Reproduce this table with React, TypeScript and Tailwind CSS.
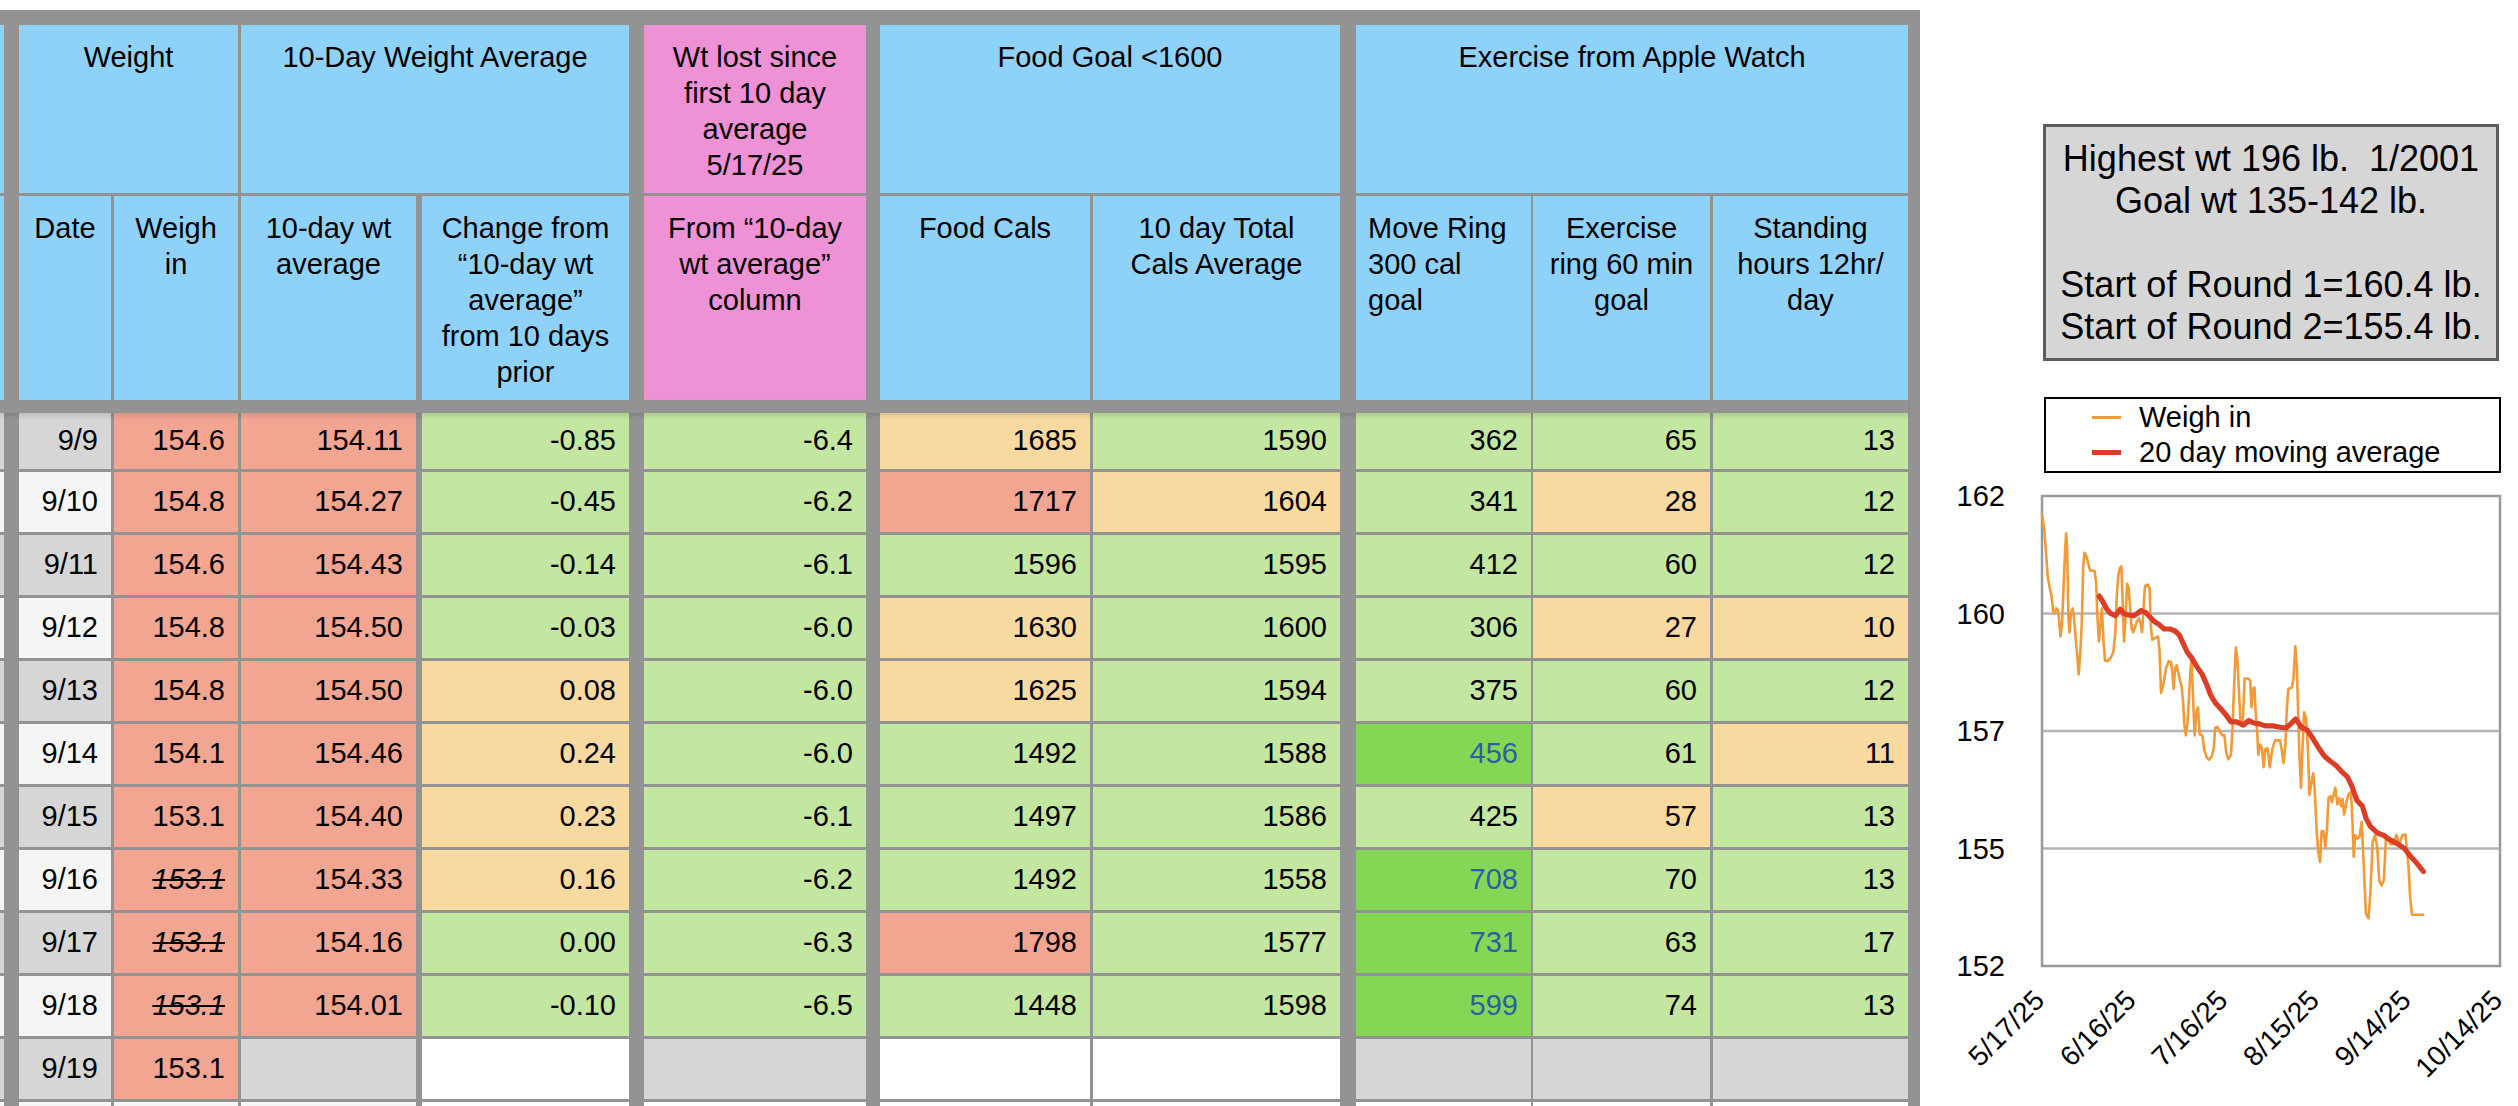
import type { ReactNode } from "react";

const fill = {
	R: "bg-[#f2a692]",
	G: "bg-[#c3e6a0]",
	O: "bg-[#f8d9a0]",
	B: "bg-[#84d655]",
	D: "bg-[#d6d6d6]",
	W: "bg-[#f5f5f5]",
	E: "bg-white",
};
type Fill = keyof typeof fill;
type Cell = [string, Fill, ("s" | "b")?];

const cols = [
	{ w: "w-[92px]", ml: "ml-[15px]" },
	{ w: "w-[124px]", ml: "ml-[3px]" },
	{ w: "w-[175px]", ml: "ml-[3px]" },
	{ w: "w-[207px]", ml: "ml-[6px]" },
	{ w: "w-[222px]", ml: "ml-[15px]" },
	{ w: "w-[210px]", ml: "ml-[14px]" },
	{ w: "w-[247px]", ml: "ml-[3px]" },
	{ w: "w-[175px]", ml: "ml-[16px]" },
	{ w: "w-[177px]", ml: "ml-[2px]" },
	{ w: "w-[195px]", ml: "ml-[3px]" },
];

const rows: Cell[][] = [
	[["9/9", "D"], ["154.6", "R"], ["154.11", "R"], ["-0.85", "G"], ["-6.4", "G"], ["1685", "O"], ["1590", "G"], ["362", "G"], ["65", "G"], ["13", "G"]],
	[["9/10", "W"], ["154.8", "R"], ["154.27", "R"], ["-0.45", "G"], ["-6.2", "G"], ["1717", "R"], ["1604", "O"], ["341", "G"], ["28", "O"], ["12", "G"]],
	[["9/11", "D"], ["154.6", "R"], ["154.43", "R"], ["-0.14", "G"], ["-6.1", "G"], ["1596", "G"], ["1595", "G"], ["412", "G"], ["60", "G"], ["12", "G"]],
	[["9/12", "W"], ["154.8", "R"], ["154.50", "R"], ["-0.03", "G"], ["-6.0", "G"], ["1630", "O"], ["1600", "G"], ["306", "G"], ["27", "O"], ["10", "O"]],
	[["9/13", "D"], ["154.8", "R"], ["154.50", "R"], ["0.08", "O"], ["-6.0", "G"], ["1625", "O"], ["1594", "G"], ["375", "G"], ["60", "G"], ["12", "G"]],
	[["9/14", "W"], ["154.1", "R"], ["154.46", "R"], ["0.24", "O"], ["-6.0", "G"], ["1492", "G"], ["1588", "G"], ["456", "B", "b"], ["61", "G"], ["11", "O"]],
	[["9/15", "D"], ["153.1", "R"], ["154.40", "R"], ["0.23", "O"], ["-6.1", "G"], ["1497", "G"], ["1586", "G"], ["425", "G"], ["57", "O"], ["13", "G"]],
	[["9/16", "W"], ["153.1", "R", "s"], ["154.33", "R"], ["0.16", "O"], ["-6.2", "G"], ["1492", "G"], ["1558", "G"], ["708", "B", "b"], ["70", "G"], ["13", "G"]],
	[["9/17", "D"], ["153.1", "R", "s"], ["154.16", "R"], ["0.00", "G"], ["-6.3", "G"], ["1798", "R"], ["1577", "G"], ["731", "B", "b"], ["63", "G"], ["17", "G"]],
	[["9/18", "W"], ["153.1", "R", "s"], ["154.01", "R"], ["-0.10", "G"], ["-6.5", "G"], ["1448", "G"], ["1598", "G"], ["599", "B", "b"], ["74", "G"], ["13", "G"]],
	[["9/19", "D"], ["153.1", "R"], ["", "D"], ["", "E"], ["", "D"], ["", "E"], ["", "E"], ["", "D"], ["", "D"], ["", "D"]],
	[["", "W"], ["", "W"], ["", "W"], ["", "E"], ["", "E"], ["", "E"], ["", "E"], ["", "E"], ["", "E"], ["", "E"]],
];

function Head({ className, children }: { className: string; children: ReactNode }) {
	return <div className={`whitespace-nowrap pt-[14px] leading-[36px] ${className}`}>{children}</div>;
}

function DataRow({ cells, first }: { cells: Cell[]; first: boolean }) {
	return (
		<div className={first ? "flex h-[56px]" : "mt-[3px] flex h-[60px]"}>
			<div className={`w-[4px] ${fill[cells[0][1]]}`} />
			{cells.map(([text, bg, flag], i) => (
				<div
					key={i}
					className={`flex items-center justify-end pr-[13px] ${cols[i].w} ${cols[i].ml} ${fill[bg]} ${
						flag === "s" ? "italic line-through" : ""
					} ${flag === "b" ? "text-[#2c5ea6]" : "text-black"}`}
				>
					{text}
				</div>
			))}
		</div>
	);
}

// traced from the chart: x on a 0.3814 px grid from 1920, y on a 0.4123 px grid from 460
const weighIn: [number, number][] = [
	[320, 130], [326, 170], [331, 230], [335, 285], [340, 310], [345, 330], [349, 368], [353, 372], [357, 360], [361, 362],
	[364, 380], [368, 428], [372, 400], [376, 320], [380, 230], [383, 178], [386, 220], [389, 380], [392, 418], [396, 370],
	[400, 360], [404, 385], [408, 430], [412, 470], [416, 520], [420, 470], [424, 400], [428, 260], [431, 225], [436, 232],
	[441, 250], [446, 268], [452, 268], [458, 270], [462, 300], [465, 380], [469, 440], [473, 400], [477, 360], [481, 440],
	[485, 486], [492, 488], [500, 480], [507, 465], [512, 420], [516, 330], [520, 280], [524, 262], [528, 258], [531, 330],
	[535, 440], [539, 380], [543, 300], [547, 310], [551, 360], [555, 410], [559, 418], [564, 405], [569, 392], [574, 384],
	[578, 395], [582, 418], [586, 360], [590, 305], [597, 302], [602, 310], [605, 400], [609, 436], [616, 432], [624, 428],
	[628, 460], [632, 565], [638, 545], [645, 505], [652, 488], [658, 490], [662, 520], [665, 555], [669, 505], [673, 498],
	[677, 515], [682, 535], [686, 548], [690, 590], [693, 640], [697, 668], [701, 640], [705, 580], [709, 510], [712, 485],
	[716, 580], [720, 668], [725, 610], [729, 600], [733, 665], [740, 668], [746, 705], [752, 722], [758, 727], [765, 718],
	[770, 700], [774, 650], [780, 647], [787, 660], [793, 668], [798, 668], [803, 710], [808, 726], [815, 716], [819, 660],
	[823, 560], [828, 455], [832, 480], [836, 560], [840, 630], [846, 638], [851, 530], [860, 530], [866, 535], [869, 600],
	[873, 555], [877, 552], [880, 610], [884, 660], [887, 715], [892, 690], [897, 700], [901, 745], [906, 700], [912, 700],
	[917, 745], [924, 700], [931, 680], [937, 680], [944, 680], [948, 700], [953, 735], [958, 690], [962, 600], [966, 555],
	[975, 552], [979, 530], [984, 452], [988, 500], [991, 600], [995, 720], [999, 795], [1003, 700], [1007, 612], [1012, 625],
	[1017, 700], [1021, 812], [1026, 785], [1031, 760], [1035, 800], [1040, 900], [1044, 950], [1049, 975], [1053, 900],
	[1058, 900], [1063, 940], [1067, 895], [1071, 820], [1076, 815], [1080, 830], [1085, 810], [1089, 795], [1094, 835],
	[1099, 820], [1104, 840], [1108, 822], [1112, 860], [1118, 830], [1124, 810], [1130, 805], [1134, 880], [1137, 962],
	[1141, 910], [1146, 918], [1152, 915], [1158, 878], [1164, 990], [1169, 1100], [1176, 1112], [1181, 1050], [1187, 925],
	[1193, 910], [1199, 940], [1204, 1020], [1210, 1032], [1216, 1020], [1222, 912], [1228, 918], [1234, 932], [1241, 932],
	[1249, 909], [1257, 932], [1265, 909], [1273, 909], [1281, 989], [1285, 1060], [1290, 1103], [1322, 1103],
];

const average: [number, number][] = [
	[470, 330], [480, 345], [490, 362], [500, 372], [512, 378], [525, 362], [535, 373], [548, 376], [560, 378], [570, 372],
	[580, 365], [592, 370], [604, 382], [615, 392], [628, 400], [640, 410], [655, 410], [668, 414], [680, 425], [690, 445],
	[700, 465], [712, 480], [725, 500], [740, 520], [752, 545], [762, 570], [775, 590], [790, 605], [802, 618], [815, 635],
	[830, 635], [848, 643], [862, 632], [875, 638], [890, 640], [905, 645], [925, 645], [945, 648], [960, 650], [972, 640],
	[985, 628], [1000, 648], [1015, 655], [1030, 675], [1045, 698], [1060, 718], [1075, 730], [1090, 740], [1105, 755],
	[1120, 768], [1132, 790], [1145, 825], [1160, 840], [1170, 870], [1182, 890], [1200, 905], [1215, 910], [1230, 920],
	[1250, 930], [1270, 942], [1285, 960], [1300, 975], [1320, 998],
];

function toPoints(pts: [number, number][]): string {
	return pts.map(([x, y]) => `${(1920 + x * 0.3814).toFixed(1)},${(460 + y * 0.4123).toFixed(1)}`).join(" ");
}

const yTicks = [
	{ label: "162", y: 496 },
	{ label: "160", y: 613.5 },
	{ label: "157", y: 731 },
	{ label: "155", y: 848.5 },
	{ label: "152", y: 966 },
];
const xTicks = ["5/17/25", "6/16/25", "7/16/25", "8/15/25", "9/14/25", "10/14/25"];

function WeightChart() {
	return (
		<svg className="mt-[7px] block" width={598} height={626} viewBox="1920 480 598 626">
			<rect x={2042} y={496} width={458} height={470} fill="white" stroke="#999999" strokeWidth={2.5} />
			{[613.5, 731, 848.5].map((y) => (
				<line key={y} x1={2043} x2={2499} y1={y} y2={y} stroke="#b4b4b4" strokeWidth={2.5} />
			))}
			{yTicks.map((t) => (
				<text key={t.label} x={2005} y={t.y + 10} textAnchor="end" fontSize={29} fill="#000" fontFamily="Liberation Sans, Arial, sans-serif">
					{t.label}
				</text>
			))}
			{xTicks.map((t, i) => {
				const x = 2046 + i * 91.6;
				return (
					<text
						key={t}
						x={x}
						y={1002}
						textAnchor="end"
						fontSize={28}
						fill="#000"
						fontFamily="Liberation Sans, Arial, sans-serif"
						transform={`rotate(-45 ${x} 1002)`}
					>
						{t}
					</text>
				);
			})}
			<polyline points={toPoints(weighIn)} fill="none" stroke="#f29a38" strokeWidth={2.6} strokeLinejoin="round" />
			<polyline points={toPoints(average)} fill="none" stroke="#dc3d26" strokeWidth={5.2} strokeLinejoin="round" strokeLinecap="round" />
		</svg>
	);
}

export default function App() {
	return (
		<div className="flex h-[1106px] w-[2518px] overflow-hidden bg-white font-['Liberation_Sans',Arial,sans-serif] text-[29px] text-black">
			<div className="mt-[10px] w-[1920px] shrink-0 self-start bg-[#939393] pt-[15px] pr-[12px]">
				<div className="flex h-[168px] text-center">
					<div className="w-[4px] bg-[#8ed2fa]" />
					<Head className="ml-[15px] w-[219px] bg-[#8ed2fa]">Weight</Head>
					<Head className="ml-[3px] w-[388px] bg-[#8ed2fa]">10-Day Weight Average</Head>
					<Head className="ml-[15px] w-[222px] bg-[#ef91d5]">
						Wt lost since
						<br />
						first 10 day
						<br />
						average
						<br />
						5/17/25
					</Head>
					<Head className="ml-[14px] w-[460px] bg-[#8ed2fa]">Food Goal &lt;1600</Head>
					<Head className="ml-[16px] w-[552px] bg-[#8ed2fa]">Exercise from Apple Watch</Head>
				</div>
				<div className="mt-[3px] flex h-[204px] text-center">
					<div className="w-[4px] bg-[#8ed2fa]" />
					<Head className="ml-[15px] w-[92px] bg-[#8ed2fa]">Date</Head>
					<Head className="ml-[3px] w-[124px] bg-[#8ed2fa]">
						Weigh
						<br />
						in
					</Head>
					<Head className="ml-[3px] w-[175px] bg-[#8ed2fa]">
						10-day wt
						<br />
						average
					</Head>
					<Head className="ml-[6px] w-[207px] bg-[#8ed2fa]">
						Change from
						<br />
						“10-day wt
						<br />
						average”
						<br />
						from 10 days
						<br />
						prior
					</Head>
					<Head className="ml-[15px] w-[222px] bg-[#ef91d5]">
						From “10-day
						<br />
						wt average”
						<br />
						column
					</Head>
					<Head className="ml-[14px] w-[210px] bg-[#8ed2fa]">Food Cals</Head>
					<Head className="ml-[3px] w-[247px] bg-[#8ed2fa]">
						10 day Total
						<br />
						Cals Average
					</Head>
					<Head className="ml-[16px] w-[175px] bg-[#8ed2fa] pl-[12px] text-left">
						Move Ring
						<br />
						300 cal
						<br />
						goal
					</Head>
					<Head className="ml-[2px] w-[177px] bg-[#8ed2fa]">
						Exercise
						<br />
						ring 60 min
						<br />
						goal
					</Head>
					<Head className="ml-[3px] w-[195px] bg-[#8ed2fa]">
						Standing
						<br />
						hours 12hr/
						<br />
						day
					</Head>
				</div>
				<div className="relative z-10 h-[13px] shadow-[0_3px_5px_rgba(0,0,0,0.12)]" />
				{rows.map((cells, i) => (
					<DataRow key={i} cells={cells} first={i === 0} />
				))}
			</div>
			<div className="flex flex-1 flex-col">
				<div className="ml-[123px] mt-[124px] flex h-[237px] w-[456px] flex-col items-center whitespace-pre border-[3px] border-[#5c5c61] bg-[#d6d6d6] pt-[11px] text-[36px] leading-[42px]">
					<div>Highest wt 196 lb.  1/2001</div>
					<div>Goal wt 135-142 lb.</div>
					<div>&nbsp;</div>
					<div>Start of Round 1=160.4 lb.</div>
					<div>Start of Round 2=155.4 lb.</div>
				</div>
				<div className="ml-[124px] mt-[36px] h-[76px] w-[457px] border-[2.5px] border-black pt-[1px] leading-[35px]">
					<div className="flex items-center">
						<div className="ml-[46px] h-[2.5px] w-[29px] bg-[#f29a38]" />
						<div className="ml-[18px]">Weigh in</div>
					</div>
					<div className="flex items-center">
						<div className="ml-[46px] h-[5px] w-[29px] bg-[#dc3d26]" />
						<div className="ml-[18px]">20 day moving average</div>
					</div>
				</div>
				<WeightChart />
			</div>
		</div>
	);
}
